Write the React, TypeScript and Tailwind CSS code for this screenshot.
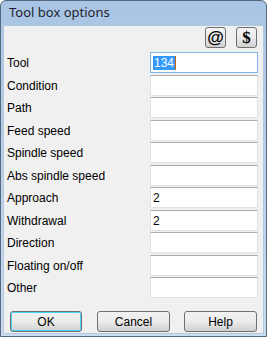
import React from 'react';

const rows: { label: string; value?: string; selected?: boolean }[] = [
  { label: 'Tool', value: '134', selected: true },
  { label: 'Condition' },
  { label: 'Path' },
  { label: 'Feed speed' },
  { label: 'Spindle speed' },
  { label: 'Abs spindle speed' },
  { label: 'Approach', value: '2' },
  { label: 'Withdrawal', value: '2' },
  { label: 'Direction' },
  { label: 'Floating on/off' },
  { label: 'Other' },
];

const btn =
  'flex items-center justify-center rounded-[3px] border border-[#707070] bg-gradient-to-b from-[#f2f2f2] via-[#ebebeb] to-[#d0d0d0] text-black';

export default function App() {
  return (
    <div className="w-[267px] h-[337px] bg-white font-['Liberation_Sans',sans-serif]">
      <div className="w-full h-full flex flex-col border border-[#56687d] rounded-t-[6px] bg-gradient-to-b from-[#a9c4e4] to-[#c9dcf0] px-[2px] pb-[2px]">
        <div className="h-[24px] shrink-0 flex items-center pl-[6px] text-[13px] text-[#1e1e2e] font-['Noto_Sans',sans-serif]">
          Tool box options
        </div>
        <div className="flex-1 flex flex-col bg-[#f0f0f0] border border-[#b5c8dd] text-[12px] text-black">
          <div className="flex justify-end gap-[10px] pt-[1px] pr-[6px]">
            <div className={`${btn} w-[21px] h-[21px] text-[17px] font-bold leading-none`}>@</div>
            <div className={`${btn} w-[21px] h-[21px] text-[17px] font-bold leading-none font-['Liberation_Serif',serif]`}>$</div>
          </div>
          <div className="flex flex-col pt-[4px] pl-[3px]">
            {rows.map((r, i) => (
              <div key={r.label} className={`flex ${i % 2 === 0 ? 'h-[23px]' : 'h-[22px]'}`}>
                <div className="w-[143px] h-[21px] flex items-center">{r.label}</div>
                <div
                  className={`w-[108px] h-[21px] flex items-center pl-[2px] bg-white border ${
                    r.selected
                      ? 'border-[#7eb4ea]'
                      : 'border-[#dde2e8] border-t-[#abadb3]'
                  }`}
                >
                  {r.selected ? (
                    <>
                      <span className="bg-[#3399ff] text-white leading-[14px] px-[1px]">{r.value}</span>
                      <span className="w-[1px] h-[14px] bg-[#cc6600]" />
                    </>
                  ) : (
                    <span>{r.value}</span>
                  )}
                </div>
              </div>
            ))}
          </div>
          <div className="flex pl-[6px] pt-[11px]">
            <div className={`${btn} w-[72px] h-[21px] border-[#3c7fb1] shadow-[inset_0_0_0_1px_#48d4fb]`}>OK</div>
            <div className={`${btn} w-[73px] h-[21px] ml-[15px]`}>Cancel</div>
            <div className={`${btn} w-[73px] h-[21px] ml-[14px]`}>Help</div>
          </div>
        </div>
      </div>
    </div>
  );
}
